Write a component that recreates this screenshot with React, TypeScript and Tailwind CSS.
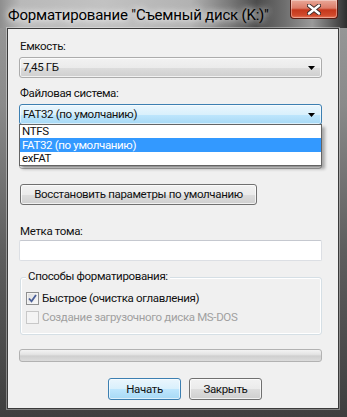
export default function App() {
  const aeroBtn =
    "bg-[linear-gradient(to_bottom,#f2f2f2_0%,#ebebeb_50%,#dddddd_51%,#cfcfcf_100%)] border border-[#707070] rounded-[3px] shadow-[inset_0_0_0_1px_rgba(255,255,255,0.7)]";
  const aeroBlue =
    "bg-[linear-gradient(to_bottom,#eaf6fd_0%,#d9f0fc_50%,#bee6fd_51%,#a7d9f5_100%)] border border-[#3c7fb1] rounded-[3px] shadow-[inset_0_0_0_1px_rgba(255,255,255,0.6)]";
  const Arrow = () => (
    <svg width="7" height="4" viewBox="0 0 7 4" className="block">
      <path d="M0 0H7L3.5 4Z" fill="#000" />
    </svg>
  );
  return (
    <div className="relative w-[347px] h-[417px] overflow-hidden bg-[linear-gradient(to_bottom,#9a9a9a_0%,#8a8a8a_25%,#5e5e5e_60%,#3e3e3e_100%)] [font-family:'Roboto','Open_Sans',sans-serif] text-[11.5px] tracking-[-0.35px] leading-[15px] text-[#111]">
      {/* title bar */}
      <div className="relative h-[28px] flex items-start bg-[linear-gradient(to_right,#8e8e8e_0%,#b9b9b9_6%,#c2c2c2_30%,#b2b2b2_55%,#7a7a7a_66%,#4c4c4c_74%,#6e6e6e_82%,#9a9a9a_90%,#2e2e2e_100%)]">
        <div className="pl-[8px] pt-[6px] text-[15px] tracking-[-0.2px] leading-[18px] text-black [text-shadow:0_0_6px_rgba(255,255,255,0.9),0_0_10px_rgba(255,255,255,0.7)] whitespace-nowrap">
          Форматирование "Съемный диск (K:)"
        </div>
        <div className="ml-auto mr-[9px] w-[48px] h-[19px] rounded-b-[4px] border border-t-0 border-[#5a1a10] bg-[linear-gradient(to_bottom,#e9a898_0%,#dc7c68_45%,#c5381c_55%,#d04a2c_85%,#e8795c_100%)] shadow-[inset_0_0_0_1px_rgba(255,255,255,0.35)] flex items-center justify-center">
          <svg width="14" height="11" viewBox="0 0 14 11" className="block">
            <path d="M2 1.5L12 9.5M12 1.5L2 9.5" stroke="#3a2a28" strokeWidth="4.2" strokeLinecap="round" />
            <path d="M2 1.5L12 9.5M12 1.5L2 9.5" stroke="#ffffff" strokeWidth="2.4" strokeLinecap="round" />
          </svg>
        </div>
      </div>

      {/* client area */}
      <div className="relative ml-[7px] w-[332px] h-[381px] border border-[#3a3a3a] bg-[#f0f0f0] shadow-[0_0_0_1px_rgba(255,255,255,0.35)] flex flex-col">
        <div className="mt-[10px] ml-[12px] h-[15px]">Емкость:</div>
        <div className={`mt-[3px] ml-[11px] w-[303px] h-[21px] flex items-center justify-between pl-[3px] pr-[6px] ${aeroBtn} border-[#acacac]`}>
          <span>7,45 ГБ</span>
          <Arrow />
        </div>

        <div className="mt-[8px] ml-[12px] h-[15px]">Файловая система:</div>
        <div className={`mt-[3px] ml-[11px] w-[303px] h-[21px] flex items-center justify-between pl-[3px] pr-[6px] ${aeroBlue}`}>
          <span>FAT32 (по умолчанию)</span>
          <Arrow />
        </div>

        <div className="mt-[5px] h-[15px]" />
        <div className={`mt-[3px] ml-[11px] w-[303px] h-[21px] ${aeroBtn} border-[#acacac]`} />

        <div className={`mt-[15px] ml-[12px] w-[237px] h-[21px] flex items-center justify-center whitespace-nowrap ${aeroBtn}`}>
          Восстановить параметры по умолчанию
        </div>

        <div className="mt-[19px] ml-[12px] h-[15px]">Метка тома:</div>
        <div className="mt-[1px] ml-[11px] w-[303px] h-[21px] bg-white border border-[#dcdfe4] border-t-[#c5c8cf] rounded-[2px]" />

        <div className="relative mt-[16px] ml-[12px] w-[302px] h-[58px] border border-[#d5dfe5] rounded-[3px] shadow-[inset_0_0_0_1px_#ffffff] flex flex-col">
          <div className="absolute -top-[9px] left-[5px] px-[2px] bg-[#f0f0f0] whitespace-nowrap">Способы форматирования:</div>
          <div className="mt-[14px] ml-[5px] flex items-center h-[13px]">
            <div className="w-[13px] h-[13px] border border-[#8e8f8f] bg-[linear-gradient(135deg,#dcdcdc,#fbfbfb)] shadow-[inset_0_0_0_1px_#f4f4f4] flex items-center justify-center">
              <svg width="9" height="9" viewBox="0 0 9 9" className="block">
                <path d="M1 4.5L3.5 7.3L8 1" stroke="#4a5f97" strokeWidth="1.8" fill="none" />
              </svg>
            </div>
            <span className="ml-[3px]">Быстрое (очистка оглавления)</span>
          </div>
          <div className="mt-[6px] ml-[5px] flex items-center h-[13px]">
            <div className="w-[13px] h-[13px] border border-[#c8c8c8] bg-[#f4f4f4]" />
            <span className="ml-[3px] text-[#a0a0a0]">Создание загрузочного диска MS-DOS</span>
          </div>
        </div>

        <div className="mt-[14px] ml-[11px] w-[303px] h-[13px] border border-[#b2b2b2] rounded-[3px] bg-[linear-gradient(to_bottom,#f3f3f3_0%,#e4e4e4_40%,#cfcfcf_55%,#dcdcdc_100%)]" />

        <div className="mt-[16px] ml-[100px] flex gap-[8px]">
          <div className={`w-[73px] h-[22px] flex items-center justify-center ${aeroBlue} shadow-[0_0_2px_#5fc6f2,inset_0_0_0_1px_rgba(255,255,255,0.6)]`}>
            Начать
          </div>
          <div className={`w-[73px] h-[22px] flex items-center justify-center ${aeroBtn}`}>Закрыть</div>
        </div>

        {/* dropdown list overlay */}
        <div className="absolute top-[95px] left-[11px] w-[303px] h-[42px] bg-white border border-[#646464] shadow-[3px_3px_3px_rgba(0,0,0,0.3)] flex flex-col">
          <div className="h-[13px] leading-[13px] pl-[2px] overflow-hidden">NTFS</div>
          <div className="h-[14px] leading-[14px] pl-[2px] bg-[#3399ff] text-white overflow-hidden">FAT32 (по умолчанию)</div>
          <div className="h-[13px] leading-[13px] pl-[2px] overflow-hidden">exFAT</div>
        </div>
      </div>
    </div>
  );
}
